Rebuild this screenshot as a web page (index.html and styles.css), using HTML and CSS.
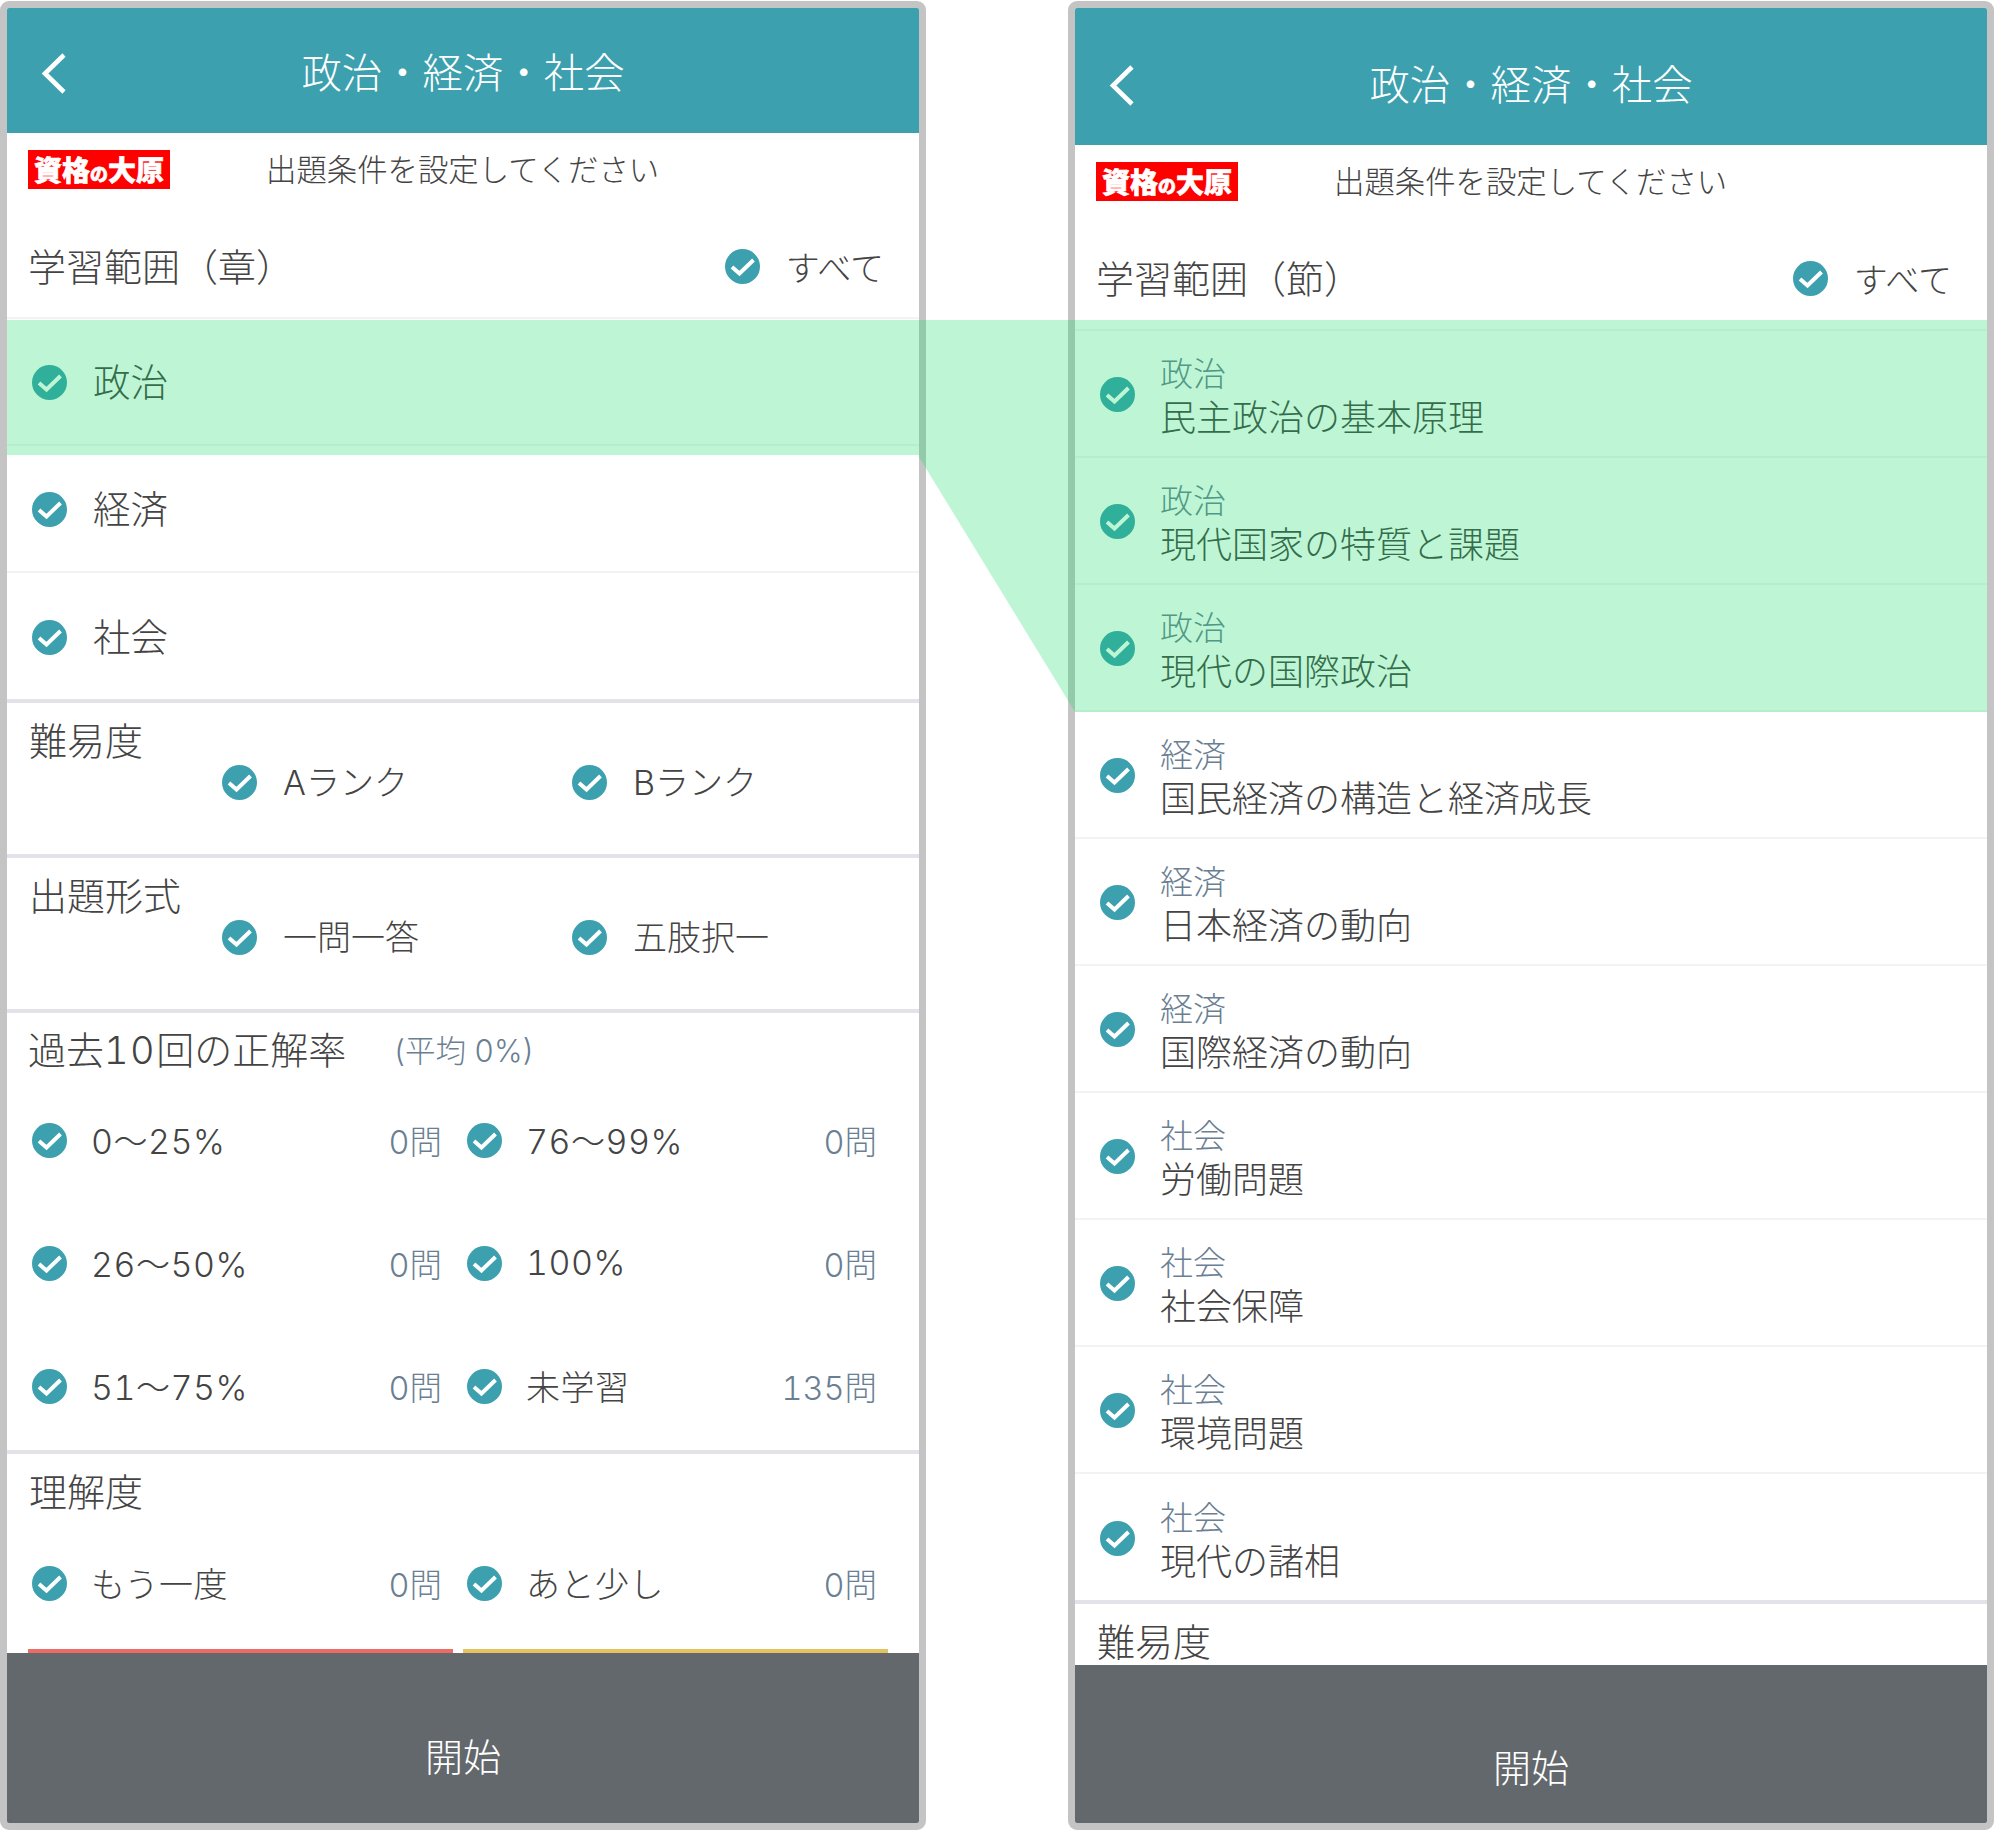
FILE: index.html
```html
<!DOCTYPE html>
<html lang="ja">
	<head>
		<meta charset="utf-8">
		<title>政治・経済・社会</title>
		<link rel="stylesheet" href="styles.css">
	</head>
	<body>
		<svg width="0" height="0" class="defs">
			<symbol id="chk" viewBox="0 0 35 35">
				<circle cx="17.5" cy="17.5" r="17.5" fill="#3da0ae"/>
				<polyline points="7,18 14.5,24.5 28.5,11" fill="none" stroke="#fff" stroke-width="3.9"/>
			</symbol>
			<symbol id="back" viewBox="0 0 28 44">
				<polyline points="24,3 5,21.5 24,40" fill="none" stroke="#fff" stroke-width="4.6"/>
			</symbol>
		</svg>

		<div class="phone phone-a">
			<div class="head">
				<svg class="back"><use href="#back"/></svg>
				<h1>政治・経済・社会</h1>
			</div>
			<div class="scroll">
				<div class="intro">
					<span class="logo">資格<small>の</small>大原</span>
					<span class="intro-text">出題条件を設定してください</span>
				</div>
				<div class="range">
					<h2>学習範囲（章）</h2>
					<span class="all"><svg class="chk"><use href="#chk"/></svg>すべて</span>
				</div>
				<div class="row"><svg class="chk"><use href="#chk"/></svg><span class="main">政治</span></div>
				<div class="row"><svg class="chk"><use href="#chk"/></svg><span class="main">経済</span></div>
				<div class="row row-last"><svg class="chk"><use href="#chk"/></svg><span class="main">社会</span></div>

				<div class="sec">
					<h2 class="sec-title">難易度</h2>
					<div class="pair">
						<span class="opt"><svg class="chk"><use href="#chk"/></svg>Aランク</span>
						<span class="opt"><svg class="chk"><use href="#chk"/></svg>Bランク</span>
					</div>
				</div>
				<div class="sec">
					<h2 class="sec-title">出題形式</h2>
					<div class="pair">
						<span class="opt"><svg class="chk"><use href="#chk"/></svg>一問一答</span>
						<span class="opt"><svg class="chk"><use href="#chk"/></svg>五肢択一</span>
					</div>
				</div>
				<div class="rate">
					<h2 class="rate-title">過去<span class="num">10</span>回の正解率<span class="avg">(平均 0%)</span></h2>
					<div class="rate-grid">
						<div class="cell"><svg class="chk"><use href="#chk"/></svg><span>0〜25%</span><em>0問</em></div>
						<div class="cell"><svg class="chk"><use href="#chk"/></svg><span>76〜99%</span><em>0問</em></div>
						<div class="cell"><svg class="chk"><use href="#chk"/></svg><span>26〜50%</span><em>0問</em></div>
						<div class="cell"><svg class="chk"><use href="#chk"/></svg><span>100%</span><em>0問</em></div>
						<div class="cell"><svg class="chk"><use href="#chk"/></svg><span>51〜75%</span><em>0問</em></div>
						<div class="cell"><svg class="chk"><use href="#chk"/></svg><span>未学習</span><em>135問</em></div>
					</div>
				</div>
				<div class="know">
					<h2 class="know-title">理解度</h2>
					<div class="rate-grid">
						<div class="cell"><svg class="chk"><use href="#chk"/></svg><span>もう一度</span><em>0問</em></div>
						<div class="cell"><svg class="chk"><use href="#chk"/></svg><span>あと少し</span><em>0問</em></div>
					</div>
					<div class="bars"><i class="bar-red"></i><i class="bar-yellow"></i></div>
				</div>
			</div>
			<div class="start">開始</div>
		</div>

		<div class="phone phone-b">
			<div class="head">
				<svg class="back"><use href="#back"/></svg>
				<h1>政治・経済・社会</h1>
			</div>
			<div class="scroll">
				<div class="intro">
					<span class="logo">資格<small>の</small>大原</span>
					<span class="intro-text">出題条件を設定してください</span>
				</div>
				<div class="range">
					<h2>学習範囲（節）</h2>
					<span class="all"><svg class="chk"><use href="#chk"/></svg>すべて</span>
				</div>
				<div class="row"><svg class="chk"><use href="#chk"/></svg><div class="two"><span class="sub">政治</span><span class="main2">民主政治の基本原理</span></div></div>
				<div class="row"><svg class="chk"><use href="#chk"/></svg><div class="two"><span class="sub">政治</span><span class="main2">現代国家の特質と課題</span></div></div>
				<div class="row"><svg class="chk"><use href="#chk"/></svg><div class="two"><span class="sub">政治</span><span class="main2">現代の国際政治</span></div></div>
				<div class="row"><svg class="chk"><use href="#chk"/></svg><div class="two"><span class="sub">経済</span><span class="main2">国民経済の構造と経済成長</span></div></div>
				<div class="row"><svg class="chk"><use href="#chk"/></svg><div class="two"><span class="sub">経済</span><span class="main2">日本経済の動向</span></div></div>
				<div class="row"><svg class="chk"><use href="#chk"/></svg><div class="two"><span class="sub">経済</span><span class="main2">国際経済の動向</span></div></div>
				<div class="row"><svg class="chk"><use href="#chk"/></svg><div class="two"><span class="sub">社会</span><span class="main2">労働問題</span></div></div>
				<div class="row"><svg class="chk"><use href="#chk"/></svg><div class="two"><span class="sub">社会</span><span class="main2">社会保障</span></div></div>
				<div class="row"><svg class="chk"><use href="#chk"/></svg><div class="two"><span class="sub">社会</span><span class="main2">環境問題</span></div></div>
				<div class="row row-last"><svg class="chk"><use href="#chk"/></svg><div class="two"><span class="sub">社会</span><span class="main2">現代の諸相</span></div></div>
				<div class="sec">
					<h2 class="sec-title">難易度</h2>
				</div>
			</div>
			<div class="start">開始</div>
		</div>

		<!-- 章と節の対応を示す帯 -->
		<svg class="band" width="2000" height="1836"><polygon points="7,320 1987,320 1987,712 1075,712 919,457 919,455 7,455"/></svg>
	</body>
</html>
```

FILE: styles.css
```css
html, body{
	margin: 0;
	padding: 0;
	background: #fff;
}
body{
	position: relative;
	width: 2000px;
	height: 1836px;
	overflow: hidden;
	display: flex;
	gap: 142px;
	padding-top: 1px;
	box-sizing: border-box;
	font-family: Inter, "Noto Sans CJK JP", "Noto Sans", sans-serif;
	font-weight: 300;
	font-variant-numeric: tabular-nums;
	color: #444;
}
.defs{
	position: absolute;
}
h1, h2{
	margin: 0;
	font-weight: 300;
}
.phone{
	width: 926px;
	height: 1829px;
	box-sizing: border-box;
	border: 7px solid #c4c4c4;
	border-radius: 9px;
	display: flex;
	flex-direction: column;
	background: #fff;
	overflow: hidden;
}
.head{
	position: relative;
	flex: none;
	background: #3da0ae;
	color: #fff;
	display: flex;
	align-items: center;
	justify-content: center;
	box-sizing: border-box;
}
.phone-a .head{
	height: 125px;
	padding-top: 6px;
}
.phone-b .head{
	height: 137px;
	padding-top: 18px;
}
.head h1{
	font-size: 40.4px;
	line-height: 50px;
}
.back{
	position: absolute;
	left: 33px;
	top: 44px;
	width: 28px;
	height: 44px;
}
.phone-b .back{
	top: 56px;
}
.scroll{
	flex: 1;
	min-height: 0;
	overflow: hidden;
}
.intro{
	height: 85px;
	padding: 17px 0 0 21px;
	box-sizing: border-box;
	display: flex;
	align-items: flex-start;
}
.logo{
	width: 142px;
	height: 39px;
	flex: none;
	background: #f00;
	color: #fff;
	font-family: "Noto Sans CJK JP", sans-serif;
	font-size: 28px;
	font-weight: 900;
	line-height: 39px;
	text-align: center;
	white-space: nowrap;
	-webkit-text-stroke: .6px #fff;
}
.logo small{
	font-size: 18px;
}
.intro-text{
	font-size: 30.4px;
	line-height: 36px;
	margin: 2px 0 0 96px;
	color: #444;
}
.range{
	height: 101px;
	display: flex;
	align-items: center;
	justify-content: space-between;
	padding: 0 35px 2px 21px;
	box-sizing: border-box;
	border-bottom: 2px solid #f3f3f5;
}
.range h2{
	font-size: 38px;
	line-height: 50px;
}
.all{
	display: flex;
	align-items: center;
	gap: 26px;
	font-size: 34px;
}
.chk{
	width: 35px;
	height: 35px;
	flex: none;
}
.row{
	height: 127px;
	box-sizing: border-box;
	display: flex;
	align-items: center;
	padding-left: 25px;
	padding-top: 3px;
	gap: 26px;
	border-bottom: 2px solid #f3f3f5;
}
.row .chk{
	margin-top: -1px;
}
.row-last{
	height: 126px;
	border-bottom: 0;
}
.main{
	font-size: 37.5px;
	line-height: 50px;
}
.two{
	margin-top: 2px;
}
.sub{
	display: block;
	margin-left: -1px;
	font-size: 33px;
	line-height: 44px;
	color: #6b7f93;
}
.main2{
	display: block;
	margin-left: -1px;
	font-size: 36px;
	line-height: 44px;
}
.sec{
	height: 155px;
	box-sizing: border-box;
	border-top: 4px solid #e2e2e8;
	padding: 13px 22px 0;
}
.sec-title{
	font-size: 38px;
	line-height: 50px;
}
.pair{
	display: flex;
	margin-top: -8px;
	padding-left: 193px;
}
.opt{
	flex: none;
	width: 350px;
	display: flex;
	align-items: center;
	gap: 26px;
	font-size: 34px;
	line-height: 50px;
}
.opt .chk{
	margin-top: -2px;
}
.rate{
	height: 441px;
	box-sizing: border-box;
	border-top: 4px solid #e2e2e8;
	padding-top: 12px;
}
.rate-title{
	font-size: 38px;
	line-height: 50px;
	padding-left: 21px;
}
.num{
	letter-spacing: 1.5px;
}
.avg{
	font-size: 30.5px;
	color: #6b7f93;
	margin-left: 47px;
	vertical-align: 2px;
}
.rate-grid{
	display: grid;
	grid-template-columns: 435px 435px;
	padding-left: 25px;
	margin-top: 38px;
	row-gap: 73px;
}
.cell{
	display: flex;
	align-items: center;
	height: 50px;
	font-size: 34px;
}
.cell .chk{
	margin-top: 2px;
}
.cell span{
	margin-left: 24px;
	flex: 1;
	letter-spacing: .5px;
}
.cell em{
	font-style: normal;
	font-size: 32.5px;
	color: #6b7f93;
	padding-right: 25px;
}
.know{
	border-top: 4px solid #e2e2e8;
	padding-top: 13px;
}
.know-title{
	font-size: 38px;
	line-height: 50px;
	padding-left: 22px;
}
.know .rate-grid{
	margin-top: 40px;
}
.bars{
	display: flex;
	gap: 10px;
	padding-left: 21px;
	margin-top: 42px;
}
.bars i{
	display: block;
	width: 425px;
	height: 4px;
}
.bar-red{
	background: #ee6a65;
}
.bar-yellow{
	background: #e5c45f;
}
.start{
	flex: none;
	background: #63686c;
	color: #fff;
	text-align: center;
	font-size: 38px;
	line-height: 50px;
	box-sizing: border-box;
}
.phone-a .start{
	height: 170px;
	padding-top: 79px;
}
.phone-b .start{
	height: 158px;
	padding-top: 78px;
}
.band{
	position: absolute;
	left: 0;
	top: 0;
	pointer-events: none;
}
.band polygon{
	fill: rgba(15, 222, 100, .27);
}
```
